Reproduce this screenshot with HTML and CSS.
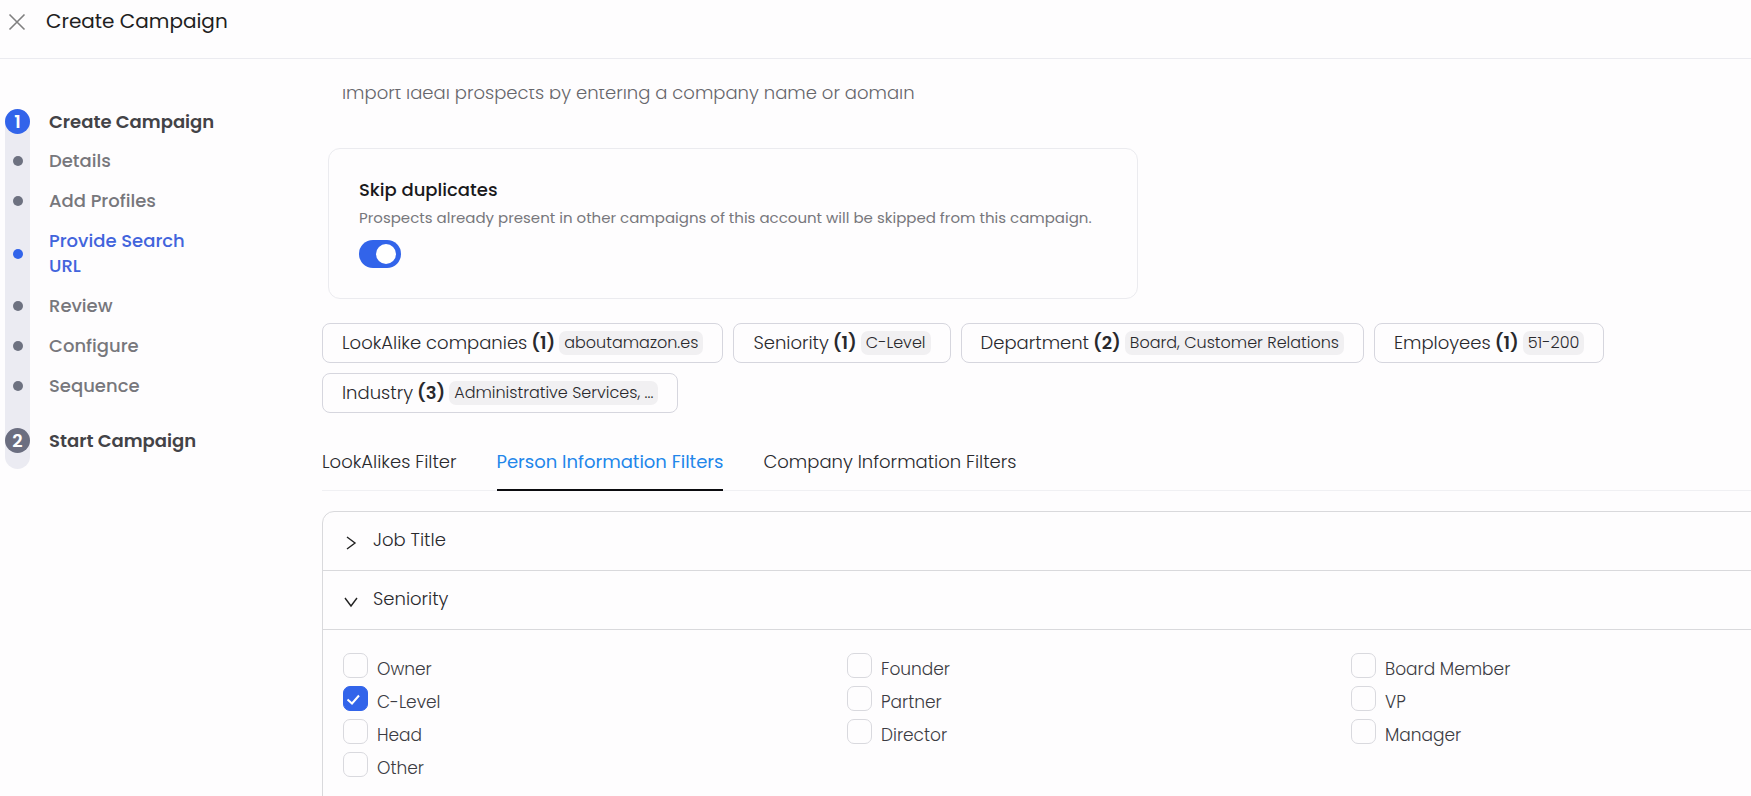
FILE: index.html
```html
<!DOCTYPE html>
<html lang="en">
<head>
    <meta charset="UTF-8">
    <meta name="viewport" content="width=device-width, initial-scale=1.0">
    <title>Create Campaign</title>
    <link rel="stylesheet" href="styles.css">
</head>
<body>
    <header class="topbar">
        <button class="close-btn" type="button" aria-label="Close">
            <svg width="18" height="18" viewBox="0 0 18 18" fill="none" stroke="#808080" stroke-width="1.6">
                <path d="M1.5 1.5L16.5 16.5M16.5 1.5L1.5 16.5"/>
            </svg>
        </button>
        <h1 class="topbar-title">Create Campaign</h1>
    </header>

    <div class="layout">
        <!-- Wizard steps -->
        <nav class="sidebar">
            <ol class="steps">
                <li class="step step-main step-first">
                    <span class="rail"><span class="badge badge-active">1</span></span>
                    <span class="step-label">Create Campaign</span>
                </li>
                <li class="step"><span class="rail"><span class="dot"></span></span><span class="step-label">Details</span></li>
                <li class="step"><span class="rail"><span class="dot"></span></span><span class="step-label">Add Profiles</span></li>
                <li class="step step-current"><span class="rail"><span class="dot"></span></span><span class="step-label">Provide Search URL</span></li>
                <li class="step"><span class="rail"><span class="dot"></span></span><span class="step-label">Review</span></li>
                <li class="step"><span class="rail"><span class="dot"></span></span><span class="step-label">Configure</span></li>
                <li class="step"><span class="rail"><span class="dot"></span></span><span class="step-label">Sequence</span></li>
                <li class="step step-main step-last">
                    <span class="rail"><span class="badge">2</span></span>
                    <span class="step-label">Start Campaign</span>
                </li>
            </ol>
        </nav>

        <main class="content">
            <p class="intro">Import ideal prospects by entering a company name or domain</p>

            <section class="card">
                <label class="card-title" for="skipDuplicates">Skip duplicates</label>
                <p class="card-text">Prospects already present in other campaigns of this account will be skipped from this campaign.</p>
                <input class="toggle" type="checkbox" role="switch" id="skipDuplicates" checked>
            </section>

            <!-- Selected filters -->
            <div class="chips">
                <button class="chip" type="button">LookAlike companies <b>(1)</b> <span class="chip-value">aboutamazon.es</span></button>
                <button class="chip" type="button">Seniority <b>(1)</b> <span class="chip-value">C-Level</span></button>
                <button class="chip" type="button">Department <b>(2)</b> <span class="chip-value">Board, Customer Relations</span></button>
                <button class="chip" type="button">Employees <b>(1)</b> <span class="chip-value">51-200</span></button>
                <button class="chip" type="button">Industry <b>(3)</b> <span class="chip-value">Administrative Services, ...</span></button>
            </div>

            <div class="tabs" role="tablist">
                <button class="tab" type="button" role="tab" aria-selected="false">LookAlikes Filter</button>
                <button class="tab tab-active" type="button" role="tab" aria-selected="true">Person Information Filters</button>
                <button class="tab" type="button" role="tab" aria-selected="false">Company Information Filters</button>
            </div>

            <div class="accordion">
                <button class="accordion-header" type="button" aria-expanded="false">
                    <svg class="chevron" width="14" height="14" viewBox="0 0 14 14" fill="none" stroke="#222" stroke-width="1.4">
                        <path d="M3 1L11 7L3 13"/>
                    </svg>
                    Job Title
                </button>
                <button class="accordion-header" type="button" aria-expanded="true">
                    <svg class="chevron" width="14" height="14" viewBox="0 0 14 14" fill="none" stroke="#222" stroke-width="1.4">
                        <path d="M1 3L7 11L13 3"/>
                    </svg>
                    Seniority
                </button>
                <div class="options">
                    <label class="option"><input class="checkbox" type="checkbox"><span>Owner</span></label>
                    <label class="option"><input class="checkbox" type="checkbox"><span>Founder</span></label>
                    <label class="option"><input class="checkbox" type="checkbox"><span>Board Member</span></label>
                    <label class="option"><input class="checkbox" type="checkbox" checked><span>C-Level</span></label>
                    <label class="option"><input class="checkbox" type="checkbox"><span>Partner</span></label>
                    <label class="option"><input class="checkbox" type="checkbox"><span>VP</span></label>
                    <label class="option"><input class="checkbox" type="checkbox"><span>Head</span></label>
                    <label class="option"><input class="checkbox" type="checkbox"><span>Director</span></label>
                    <label class="option"><input class="checkbox" type="checkbox"><span>Manager</span></label>
                    <label class="option"><input class="checkbox" type="checkbox"><span>Other</span></label>
                </div>
            </div>
        </main>
    </div>
</body>
</html>
```
FILE: styles.css
```css
* { margin: 0; padding: 0; box-sizing: border-box; }

body {
    font-family: Poppins, 'Inter', sans-serif;
    font-size: 18px;
    font-weight: 300;
    line-height: 24px;
    color: #29292d;
    background-color: #fefdfe;
    height: 100vh;
    display: flex;
    flex-direction: column;
    overflow: hidden;
}

button {
    font: inherit;
    color: inherit;
    background: none;
    border: none;
    cursor: pointer;
}

/* Top bar */
.topbar {
    display: flex;
    align-items: center;
    gap: 20px;
    padding: 9px 8px 25px;
    border-bottom: 1px solid #ebebf0;
}

.close-btn {
    display: flex;
    margin-top: 2px;
}

.topbar-title {
    font-size: 20px;
    font-weight: 400;
    color: #1f1f22;
}

.layout {
    flex: 1;
    display: flex;
    min-height: 0;
    overflow: hidden;
}

/* Sidebar */
.sidebar {
    flex: none;
    width: 322px;
    padding: 50px 0 0 5px;
}

.steps {
    list-style: none;
    width: 200px;
    line-height: 25px;
    font-weight: 500;
    color: #77777c;
}

.step {
    display: flex;
    gap: 19px;
}

.step-label {
    flex: 1;
    padding: 7px 0 8px;
}

.rail {
    display: flex;
    justify-content: center;
    align-items: center;
    width: 25px;
    background-color: #ebebf2;
}

.dot {
    width: 10px;
    height: 10px;
    border-radius: 50%;
    background-color: #6d7180;
}

.badge {
    width: 25px;
    height: 25px;
    border-radius: 50%;
    background-color: #6b6e80;
    color: white;
    font-weight: 600;
    text-align: center;
}

.badge-active {
    background-color: #3264ea;
}

.step-main {
    color: #434347;
    font-weight: 600;
    white-space: nowrap;
}

.step-main .rail {
    align-items: flex-start;
}

.step-first .rail {
    border-radius: 13px 13px 0 0;
}

.step-first .step-label {
    padding: 0 0 7px;
}

.step-last .rail {
    padding-top: 22px;
    border-radius: 0 0 13px 13px;
}

.step-last .step-label {
    padding: 22px 0 16px;
}

.step-current {
    color: #4264dc;
}

.step-current .dot {
    background-color: #3264ea;
}

/* Main column, wider than the window and cut at the right */
.content {
    flex: 1;
    min-width: 0;
    margin: 30px -125px 0 0;
    overflow: hidden;
}

.intro {
    margin: -8px 0 43px;
    padding-left: 20px;
    color: #66666b;
}

.card {
    width: 810px;
    max-width: 100%;
    margin: 0 0 24px 6px;
    padding: 29px 30px 30px;
    border: 1px solid #ebebef;
    border-radius: 12px;
}

.card-title {
    display: block;
    font-weight: 500;
    color: #19191c;
}

.card-text {
    margin: 4px 0 10px;
    font-size: 15px;
    font-weight: 400;
    color: #77777c;
}

.toggle {
    display: block;
    appearance: none;
    width: 42px;
    height: 28px;
    padding: 4px 5px;
    border-radius: 14px;
    background-color: #ccccd4;
    cursor: pointer;
}

.toggle::before {
    content: "";
    display: block;
    width: 20px;
    height: 20px;
    border-radius: 50%;
    background-color: white;
}

.toggle:checked {
    background-color: #3264ea;
}

.toggle:checked::before {
    margin-left: auto;
}

/* Filter chips */
.chips {
    display: flex;
    flex-wrap: wrap;
    gap: 10px;
    max-width: 1400px;
}

.chip {
    display: flex;
    align-items: center;
    gap: 4px;
    height: 40px;
    padding: 0 19px 1px;
    border: 1px solid #d6d6de;
    border-radius: 8px;
}

.chip b {
    font-weight: 600;
}

.chip-value {
    padding: 0 5px;
    border-radius: 7px;
    background-color: #f1f0f2;
    font-size: 16px;
}

/* Tabs */
.tabs {
    display: flex;
    gap: 40px;
    margin: 37px 0 20px;
    border-bottom: 1px solid #f0f0f3;
}

.tab {
    margin-bottom: -1px;
    padding-bottom: 15px;
    border-bottom: 2px solid transparent;
}

.tab-active {
    color: #2286ea;
    font-weight: 400;
    border-bottom-color: #0c0c10;
}

/* Accordion */
.accordion {
    border: 1px solid #d9d9dc;
    border-radius: 12px;
}

.accordion-header {
    display: flex;
    align-items: center;
    gap: 15px;
    width: 100%;
    padding: 16px 21px 18px;
    border-bottom: 1px solid #d9d9dc;
}

.chevron {
    margin-top: 5px;
}

.options {
    display: grid;
    grid-template-columns: repeat(3, 1fr);
    row-gap: 8px;
    padding: 23px 20px 60px;
    font-size: 17px;
    line-height: 25px;
    color: #3b3b42;
}

.option {
    display: flex;
    gap: 9px;
}

.option span {
    padding-top: 4px;
    margin-bottom: -4px;
}

.checkbox {
    appearance: none;
    width: 25px;
    height: 25px;
    border: 1px solid #d9d9de;
    border-radius: 7px;
    cursor: pointer;
}

.checkbox:checked {
    border-color: #3264ea;
    background: #3264ea url("data:image/svg+xml,%3Csvg xmlns='http://www.w3.org/2000/svg' viewBox='0 0 25 25' fill='none' stroke='white' stroke-width='2'%3E%3Cpath d='M4.5 13.5L9 17.5L16 9.5'/%3E%3C/svg%3E") center / 25px no-repeat;
}
```
